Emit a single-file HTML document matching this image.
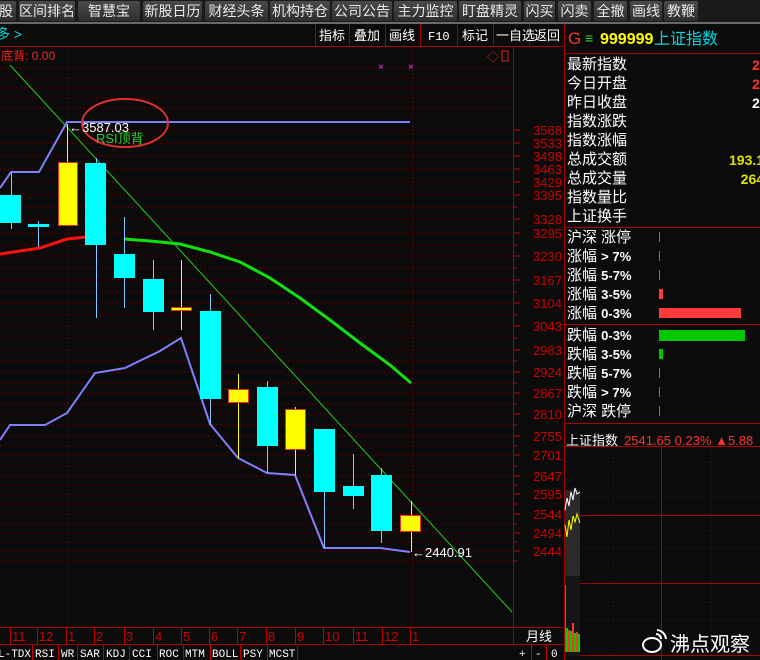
<!DOCTYPE html>
<html><head><meta charset="utf-8"><style>
body{margin:0;width:760px;height:660px;background:#0b0b0b;overflow:hidden;position:relative;font-family:"Liberation Sans","Noto Sans CJK SC",sans-serif}
.tb{position:absolute;top:0;left:0;width:760px;height:22px;background:#1a1a1a}
.b{position:absolute;top:1px;height:20px;background:linear-gradient(#4a4a4a,#2e2e2e);color:#e8e8e8;font-size:14px;line-height:20px;text-align:center;border-radius:2px}
.t{position:absolute;white-space:nowrap}
.rp{font-size:15px;color:#fff;line-height:19px}
</style></head><body>
<div class="tb">
<div class="b" style="left:-4px;width:20px">股</div>
<div class="b" style="left:19px;width:56px">区间排名</div>
<div class="b" style="left:78px;width:62px">智慧宝</div>
<div class="b" style="left:143px;width:59px">新股日历</div>
<div class="b" style="left:205px;width:63px">财经头条</div>
<div class="b" style="left:270px;width:60px">机构持仓</div>
<div class="b" style="left:332px;width:60px">公司公告</div>
<div class="b" style="left:394px;width:63px">主力监控</div>
<div class="b" style="left:459px;width:62px">盯盘精灵</div>
<div class="b" style="left:524px;width:31px">闪买</div>
<div class="b" style="left:558px;width:33px">闪卖</div>
<div class="b" style="left:594px;width:33px">全撤</div>
<div class="b" style="left:630px;width:32px">画线</div>
<div class="b" style="left:664px;width:34px">教鞭</div>
</div>
<div style="position:absolute;top:22px;left:0;width:760px;height:2px;background:#6a6a6a"></div>
<svg width="760" height="660" style="position:absolute;left:0;top:0" font-family="Liberation Sans, Noto Sans CJK SC, sans-serif">
<g stroke="#a00000" stroke-width="1" fill="none">
<line x1="0" y1="46.5" x2="563" y2="46.5"/>
<line x1="315.5" y1="24" x2="315.5" y2="46"/><line x1="349.5" y1="24" x2="349.5" y2="46"/><line x1="385.5" y1="24" x2="385.5" y2="46"/><line x1="420.5" y1="24" x2="420.5" y2="46"/><line x1="457.5" y1="24" x2="457.5" y2="46"/><line x1="493.5" y1="24" x2="493.5" y2="46"/><line x1="529.5" y1="24" x2="529.5" y2="46"/>
<line x1="564.5" y1="24" x2="564.5" y2="660"/>
<line x1="513.5" y1="46" x2="513.5" y2="645"/>
<line x1="0" y1="627.5" x2="564" y2="627.5"/>
<line x1="0" y1="644.5" x2="564" y2="644.5"/>
<line x1="565" y1="53.5" x2="760" y2="53.5"/>
<line x1="565" y1="227.5" x2="760" y2="227.5"/>
<line x1="565" y1="324.5" x2="760" y2="324.5"/>
<line x1="565" y1="423.5" x2="760" y2="423.5"/>
<line x1="565" y1="446.5" x2="760" y2="446.5"/>
</g>
<g stroke="#7a0000" stroke-dasharray="1,3">
<line x1="0" y1="68" x2="512" y2="68"/><line x1="0" y1="78" x2="512" y2="78"/><line x1="0" y1="88" x2="512" y2="88"/><line x1="0" y1="98" x2="512" y2="98"/><line x1="0" y1="108" x2="512" y2="108"/><line x1="0" y1="130" x2="512" y2="130"/><line x1="0" y1="143" x2="512" y2="143"/><line x1="0" y1="156" x2="512" y2="156"/><line x1="0" y1="169" x2="512" y2="169"/><line x1="0" y1="182" x2="512" y2="182"/><line x1="0" y1="195" x2="512" y2="195"/><line x1="0" y1="207" x2="512" y2="207"/><line x1="0" y1="219" x2="512" y2="219"/><line x1="0" y1="233" x2="512" y2="233"/><line x1="0" y1="245" x2="512" y2="245"/><line x1="0" y1="256" x2="512" y2="256"/><line x1="0" y1="268" x2="512" y2="268"/><line x1="0" y1="280" x2="512" y2="280"/><line x1="0" y1="292" x2="512" y2="292"/><line x1="0" y1="303" x2="512" y2="303"/><line x1="0" y1="315" x2="512" y2="315"/><line x1="0" y1="326" x2="512" y2="326"/><line x1="0" y1="338" x2="512" y2="338"/><line x1="0" y1="350" x2="512" y2="350"/><line x1="0" y1="361" x2="512" y2="361"/><line x1="0" y1="372" x2="512" y2="372"/><line x1="0" y1="383" x2="512" y2="383"/><line x1="0" y1="393" x2="512" y2="393"/><line x1="0" y1="404" x2="512" y2="404"/><line x1="0" y1="414" x2="512" y2="414"/><line x1="0" y1="425" x2="512" y2="425"/><line x1="0" y1="436" x2="512" y2="436"/><line x1="0" y1="446" x2="512" y2="446"/><line x1="0" y1="455" x2="512" y2="455"/><line x1="0" y1="466" x2="512" y2="466"/><line x1="0" y1="476" x2="512" y2="476"/><line x1="0" y1="485" x2="512" y2="485"/><line x1="0" y1="494" x2="512" y2="494"/><line x1="0" y1="504" x2="512" y2="504"/><line x1="0" y1="514" x2="512" y2="514"/><line x1="0" y1="524" x2="512" y2="524"/><line x1="0" y1="533" x2="512" y2="533"/><line x1="0" y1="542" x2="512" y2="542"/><line x1="0" y1="551" x2="512" y2="551"/><line x1="0" y1="561" x2="512" y2="561"/>
<line x1="67.5" y1="50" x2="67.5" y2="627"/><line x1="412.5" y1="50" x2="412.5" y2="627"/>
<line x1="613.5" y1="450" x2="613.5" y2="660"/><line x1="711.5" y1="450" x2="711.5" y2="660"/>
<line x1="565" y1="462" x2="760" y2="462"/><line x1="565" y1="480" x2="760" y2="480"/><line x1="565" y1="497" x2="760" y2="497"/><line x1="565" y1="531" x2="760" y2="531"/><line x1="565" y1="548" x2="760" y2="548"/><line x1="565" y1="565" x2="760" y2="565"/><line x1="565" y1="602" x2="760" y2="602"/><line x1="565" y1="620" x2="760" y2="620"/>
</g>
<g stroke="#a00000"><line x1="661.5" y1="447" x2="661.5" y2="660"/><line x1="565" y1="515.5" x2="760" y2="515.5"/><line x1="565" y1="583.5" x2="760" y2="583.5"/><line x1="565" y1="655.5" x2="760" y2="655.5"/></g>
<g stroke="#c00000">
<path d="M513 130h7M513 143h7M513 156h7M513 169h7M513 182h7M513 195h7M513 219h7M513 233h7M513 256h7M513 280h7M513 303h7M513 326h7M513 350h7M513 372h7M513 393h7M513 414h7M513 436h7M513 455h7M513 476h7M513 494h7M513 514h7M513 533h7M513 551h7M513 207h4M513 245h4M513 268h4M513 292h4M513 315h4M513 338h4M513 361h4M513 383h4M513 404h4M513 425h4M513 446h4M513 466h4M513 485h4M513 504h4M513 524h4M513 542h4M513 561h4"/>
<path d="M10.5 628v16M37.5 628v16M66.5 628v16M94.5 628v16M124.5 628v16M153.5 628v16M181.5 628v16M209.5 628v16M237.5 628v16M266.5 628v16M295.5 628v16M323.5 628v16M353.5 628v16M382.5 628v16M410.5 628v16"/>
<path d="M32.5 645v15M58.5 645v15M77.5 645v15M103.5 645v15M129.5 645v15M157.5 645v15M183.5 645v15M210.5 645v15M240.5 645v15M267.5 645v15M297.5 645v15M531.5 645v15M546.5 645v15"/>
</g>
<g fill="#d00000" font-size="13" text-anchor="end">
<text x="562" y="135">3568</text><text x="562" y="148">3533</text><text x="562" y="161">3498</text><text x="562" y="174">3463</text><text x="562" y="187">3429</text><text x="562" y="200">3395</text><text x="562" y="224">3328</text><text x="562" y="238">3295</text><text x="562" y="261">3230</text><text x="562" y="285">3167</text><text x="562" y="308">3104</text><text x="562" y="331">3043</text><text x="562" y="355">2983</text><text x="562" y="377">2924</text><text x="562" y="398">2867</text><text x="562" y="419">2810</text><text x="562" y="441">2755</text><text x="562" y="460">2701</text><text x="562" y="481">2647</text><text x="562" y="499">2595</text><text x="562" y="519">2544</text><text x="562" y="538">2494</text><text x="562" y="556">2444</text>
</g>
<g fill="#d00000" font-size="13">
<text x="12" y="641">11</text><text x="39" y="641">12</text><text x="68" y="641">1</text><text x="96" y="641">2</text><text x="126" y="641">3</text><text x="155" y="641">4</text><text x="183" y="641">5</text><text x="211" y="641">6</text><text x="239" y="641">7</text><text x="268" y="641">8</text><text x="297" y="641">9</text><text x="325" y="641">10</text><text x="355" y="641">11</text><text x="384" y="641">12</text><text x="412" y="641">1</text>
</g>
<text x="526" y="641" fill="#fff" font-size="13">月线</text>
<g fill="#fff" font-size="11" font-family="Liberation Mono, monospace">
<text x="-2" y="657">L-TDX</text><text x="35" y="657">RSI</text><text x="61" y="657">WR</text><text x="80" y="657">SAR</text><text x="106" y="657">KDJ</text><text x="132" y="657">CCI</text><text x="159" y="657">ROC</text><text x="185" y="657">MTM</text><text x="212" y="657">BOLL</text><text x="243" y="657">PSY</text><text x="269" y="657">MCST</text>
<text x="519" y="657">+</text><text x="535" y="657">-</text><text x="551" y="657">0</text>
</g>
<text x="-4" y="39" fill="#00d8e0" font-size="14">多 &gt;</text>
<g fill="#fff" font-size="13"><text x="319" y="40">指标</text><text x="354" y="40">叠加</text><text x="389" y="40">画线</text><text x="428" y="40" font-family="Liberation Mono" font-size="12">F10</text><text x="462" y="40">标记</text><text x="496" y="40">一自选</text><text x="534" y="40">返回</text></g>
<text x="568" y="44" fill="#ff3030" font-size="17">G</text><text x="585" y="43" fill="#30d030" font-size="14">≡</text><text x="600" y="44" fill="#ffff00" font-size="16" font-weight="bold">999999</text><text x="654" y="44" fill="#00d8e0" font-size="16">上证指数</text>
<text x="-2" y="60" fill="#ff2020" font-size="12">|底背: 0.00</text>
<text x="378" y="70" fill="#e040e0" font-size="10">×</text><text x="408" y="70" fill="#e040e0" font-size="10">×</text>
<text x="487" y="61" fill="#e02020" font-size="12">◇</text><rect x="502" y="51" width="6" height="10" fill="none" stroke="#e02020"/>
<line x1="10" y1="65" x2="512" y2="612" stroke="#20d020" stroke-width="1"/>
<polyline points="0,188 11,172 39,172 67,122 410,122" fill="none" stroke="#8080ff" stroke-width="2"/>
<polyline points="0,440 10,425 45,425 67,413 95,373 125,368 160,351 181,338 210,424 238,458 267,473 295,475 324,548 380,548 410,552" fill="none" stroke="#8080ff" stroke-width="2"/>
<polyline points="0,254 40,248 67,239 96,236" fill="none" stroke="#ff1010" stroke-width="3"/>
<polyline points="124,239 150,241 180,244 210,252 240,262 270,278 300,298 330,320 360,343 390,365 411,383" fill="none" stroke="#10e010" stroke-width="3"/>
<g stroke="#80c8ff"><path d="M11.5 173v56M38.5 221v26M96.5 158v160M124.5 217v91M153.5 260v70M210.5 294v131M267.5 381v92M324.5 429v119M353.5 454v55M381.5 468v75"/></g>
<g stroke="#ffff00"><path d="M67.5 124v38M181.5 260v70M238.5 374v84M295.5 407v68M411.5 501v51"/></g>
<g fill="#00ffff">
<rect x="0" y="195" width="21" height="28"/><rect x="28" y="224" width="21" height="3"/><rect x="85" y="163" width="21" height="82"/><rect x="114" y="254" width="21" height="24"/><rect x="143" y="279" width="21" height="33"/><rect x="200" y="311" width="21" height="88"/><rect x="257" y="387" width="21" height="59"/><rect x="314" y="429" width="21" height="63"/><rect x="343" y="486" width="21" height="10"/><rect x="371" y="475" width="21" height="56"/>
</g>
<g fill="#ffff00" stroke="#e03030">
<rect x="58.5" y="162.5" width="19" height="63"/><rect x="171.5" y="307.5" width="20" height="3"/><rect x="228.5" y="389.5" width="20" height="13"/><rect x="285.5" y="409.5" width="20" height="40"/><rect x="400.5" y="515.5" width="20" height="16"/>
</g>
<ellipse cx="125" cy="123" rx="43" ry="24" fill="none" stroke="#e03030" stroke-width="2"/>
<text x="69" y="132" fill="#fff" font-size="13">←3587.03</text>
<text x="96" y="143" fill="#30d030" font-size="13">RSI顶背</text>
<text x="412" y="557" fill="#fff" font-size="13">←2440.91</text>
<rect x="659" y="308" width="82" height="10" fill="#ff3a3a"/>
<rect x="659" y="289" width="4" height="10" fill="#ff3a3a"/>
<rect x="659" y="232" width="1" height="10" fill="#ff3a3a"/><rect x="659" y="251" width="1" height="10" fill="#ff3a3a"/><rect x="659" y="270" width="1" height="10" fill="#ff3a3a"/>
<rect x="659" y="330" width="86" height="11" fill="#00c800"/>
<rect x="659" y="349" width="4" height="10" fill="#00c800"/>
<rect x="659" y="368" width="1" height="10" fill="#00c800"/><rect x="659" y="387" width="1" height="10" fill="#00c800"/><rect x="659" y="406" width="1" height="10" fill="#00c800"/>
<rect x="565" y="490" width="15" height="86" fill="#2a2a2a"/>
<rect x="565" y="576" width="15" height="80" fill="#161616"/>
<polyline points="565,510 567,498 569,506 571,492 573,500 575,488 577,494 580,492" fill="none" stroke="#fff"/>
<polyline points="565,525 567,537 569,520 571,530 573,516 575,522 577,514 580,523" fill="none" stroke="#ffff00"/>
<g fill="#00d000"><rect x="566" y="628" width="2" height="24"/><rect x="570" y="631" width="2" height="21"/><rect x="574" y="633" width="2" height="19"/><rect x="578" y="634" width="2" height="18"/></g>
<g fill="#ff3030"><rect x="568" y="630" width="2" height="22"/><rect x="572" y="623" width="2" height="29"/><rect x="576" y="632" width="2" height="20"/><rect x="565" y="585" width="1" height="67"/></g>
<g fill="none" stroke="#fff" stroke-width="2"><ellipse cx="652" cy="645" rx="9" ry="7"/><path d="M657 630a10 10 0 0 1 9 9M656 634a5 5 0 0 1 5 5"/></g>
<text x="670" y="651" fill="#fff" font-size="20">沸点观察</text>
<text x="566" y="445" fill="#fff" font-size="13">上证指数</text>
<text x="624" y="445" fill="#ff3030" font-size="13">2541.65 0.23% ▲5.88</text>
</svg>
<div class="t rp" style="left:567px;top:55px">最新指数<br>今日开盘<br>昨日收盘<br>指数涨跌<br>指数涨幅<br>总成交额<br>总成交量<br>指数量比<br>上证换手</div>
<div class="t" style="left:752px;top:56px;font-size:14px;line-height:19px;font-weight:bold"><span style="color:#ff3030">2</span><br><span style="color:#ff3030">2</span><br><span style="color:#fff">2</span></div>
<div class="t" style="left:729px;top:151px;font-size:14px;line-height:19px;font-weight:bold;color:#e0e000">193.1<br>&nbsp;&nbsp;&nbsp;264</div>
<div class="t rp" style="left:567px;top:228px">沪深 涨停<br>涨幅 <b style="font-size:13px">&gt; 7%</b><br>涨幅 <b style="font-size:13px">5-7%</b><br>涨幅 <b style="font-size:13px">3-5%</b><br>涨幅 <b style="font-size:13px">0-3%</b></div>
<div class="t rp" style="left:567px;top:326px">跌幅 <b style="font-size:13px">0-3%</b><br>跌幅 <b style="font-size:13px">3-5%</b><br>跌幅 <b style="font-size:13px">5-7%</b><br>跌幅 <b style="font-size:13px">&gt; 7%</b><br>沪深 跌停</div>
</body></html>
